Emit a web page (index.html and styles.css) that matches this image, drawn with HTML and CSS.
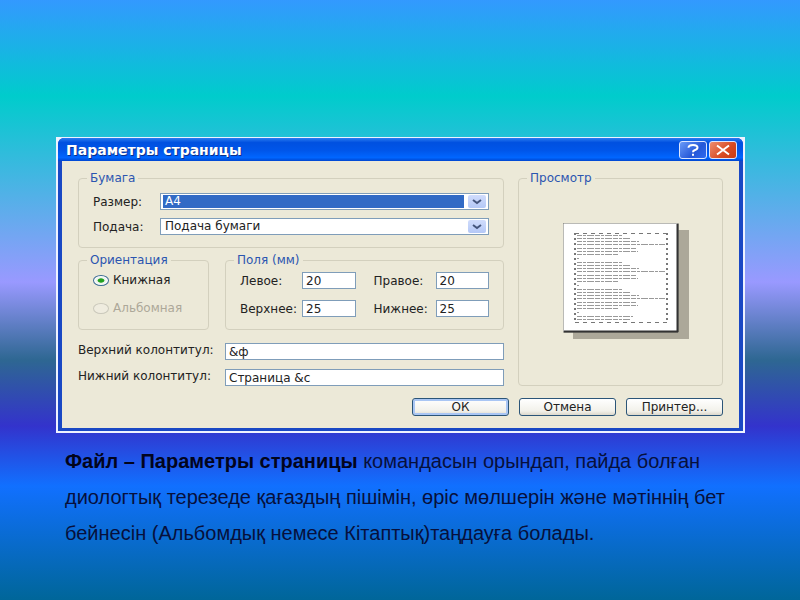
FILE: index.html
```html
<!DOCTYPE html>
<html lang="kk">
<head>
    <meta charset="UTF-8">
    <meta name="viewport" content="width=device-width, initial-scale=1.0">
    <title>Параметры страницы</title>
    <link rel="stylesheet" href="styles.css">
</head>
<body>
    <main class="slide">
        <form class="dialog" id="pageSetupForm">
            <div class="window">
                <div class="title-bar">
                    <h1>Параметры страницы</h1>
                    <button type="button" class="title-button" aria-label="Справка">
                        <svg viewBox="0 0 28 18" width="28" height="18"><path d="M9.500 6.800Q9.500 4 14 4t4.500 2.600Q18.500 8.400 15.500 9.300Q14 9.800 14 11.200M14 12.800v2" /></svg>
                    </button>
                    <button type="button" class="title-button close" aria-label="Закрыть">
                        <svg viewBox="0 0 28 18" width="28" height="18"><path d="M8 4.500L20 13.500M20 4.500L8 13.500" /></svg>
                    </button>
                </div>

                <div class="window-body">
                    <div class="columns">
                        <div class="settings">
                            <fieldset>
                                <legend>Бумага</legend>
                                <div class="paper">
                                    <label for="size">Размер:</label>
                                    <div class="combo">
                                        <select id="size" name="size" class="highlighted">
                                            <option>A4</option>
                                        </select>
                                        <svg class="arrow" viewBox="0 0 18 13" width="18" height="13"><path d="M5 5l4 3l4-3" /></svg>
                                    </div>
                                    <label for="source">Подача:</label>
                                    <div class="combo">
                                        <select id="source" name="source">
                                            <option>Подача бумаги</option>
                                        </select>
                                        <svg class="arrow" viewBox="0 0 18 13" width="18" height="13"><path d="M5 5l4 3l4-3" /></svg>
                                    </div>
                                </div>
                            </fieldset>

                            <div class="groups">
                                <fieldset>
                                    <legend>Ориентация</legend>
                                    <div class="orientation">
                                        <label><input type="radio" name="orientation" checked> Книжная</label>
                                        <label class="disabled"><input type="radio" name="orientation" disabled> Альбомная</label>
                                    </div>
                                </fieldset>
                                <fieldset>
                                    <legend>Поля (мм)</legend>
                                    <div class="margins">
                                        <label for="left">Левое:</label>
                                        <input type="text" id="left" value="20">
                                        <label for="right" class="second">Правое:</label>
                                        <input type="text" id="right" value="20">
                                        <label for="top">Верхнее:</label>
                                        <input type="text" id="top" value="25">
                                        <label for="bottom" class="second">Нижнее:</label>
                                        <input type="text" id="bottom" value="25">
                                    </div>
                                </fieldset>
                            </div>

                            <div class="running-titles">
                                <label for="header">Верхний колонтитул:</label>
                                <input type="text" id="header" value="&amp;ф">
                                <label for="footer">Нижний колонтитул:</label>
                                <input type="text" id="footer" value="Страница &amp;с">
                            </div>
                        </div>

                        <fieldset class="preview">
                            <legend>Просмотр</legend>
                            <svg class="page" viewBox="0 0 126 116" width="126" height="116">
                                <defs>
                                    <g id="paragraph">
                                        <path d="M14 12.500h45M14 15.500h54M14 18.500h62M14 21.500h88M14 25.500h60M14 28.500h61M14 31.500h42M14 35.500h2" />
                                    </g>
                                </defs>
                                <rect class="shadow" x="10" y="7" width="116" height="109" />
                                <rect class="sheet" x="0" y="0" width="115" height="109" />
                                <path class="edge" d="M1 108.500H115M114.500 1V109" />
                                <g class="sheet-text">
                                    <use href="#paragraph" />
                                    <use href="#paragraph" y="27" />
                                    <use href="#paragraph" y="54" />
                                    <path d="M14 93.500h56M14 96.500h54" />
                                </g>
                                <path class="guides" d="M12 10.500H104M12 99.500H104" />
                                <path class="guides side" d="M12 10V99M104 10V99" />
                            </svg>
                        </fieldset>
                    </div>

                    <div class="buttons">
                        <button type="submit" class="default">ОК</button>
                        <button type="button">Отмена</button>
                        <button type="button">Принтер...</button>
                    </div>
                </div>
            </div>
        </form>

        <p class="caption"><strong>Файл – Параметры страницы</strong> командасын орындап, пайда болған диологтық терезеде қағаздың пішімін, өріс мөлшерін және мәтіннің бет бейнесін (Альбомдық немесе Кітаптық)таңдауға болады.</p>
    </main>
</body>
</html>
```
FILE: styles.css
```css
* {
    box-sizing: border-box;
}
body {
    margin: 0;
    font-family: "Liberation Sans", Arial, sans-serif;
}
.slide {
    min-height: 100vh;
    padding: 137px 55px 0 56px;
    background: linear-gradient(#3399ff 0%, #00cccc 16%, #9999ff 47%, #2e6792 60%, #3333cc 71%, #1170ff 81%, #006699 100%);
}

/* dialog window */
.dialog {
    padding: 1px 2px 2px;
    background: #eef2ff;
    font-family: "DejaVu Sans", Verdana, sans-serif;
    font-size: 12px;
    line-height: 14px;
    color: #222;
}
.window {
    border: solid #1a48c4;
    border-width: 0 4px 3px;
    border-radius: 6px 6px 0 0;
    background: #1a48c4;
}
.title-bar {
    display: flex;
    align-items: center;
    gap: 2px;
    height: 23px;
    margin: 0 -4px;
    padding: 0 6px 0 8px;
    border-radius: 6px 6px 0 0;
    background: linear-gradient(#2a7cf0, #0050e0 20%, #0056ea 55%, #0066ff 85%, #0046d0);
}
.title-bar h1 {
    flex: 1;
    margin: 0;
    font-size: 14px;
    line-height: 16px;
    color: #fff;
    text-shadow: 1px 1px 0 #0a2f8c;
}
.title-button {
    width: 28px;
    height: 18px;
    padding: 0;
    border: 1px solid #dce6ff;
    border-radius: 3px;
    background: linear-gradient(135deg, #6a9af8, #2558d8 60%, #2f6af0);
}
.title-button.close {
    background: linear-gradient(135deg, #ee8e70, #d84a22 60%, #c83c14);
}
.title-button svg {
    display: block;
    margin: -1px;
    fill: none;
    stroke: #fff;
    stroke-width: 2;
}
.window-body {
    padding: 10px 16px 12px;
    background: #ece9d8;
}
.columns {
    display: grid;
    grid-template-columns: 426fr 205fr;
    gap: 14px;
}

/* groups */
fieldset {
    min-width: 0;
    margin: 0;
    padding: 0 14px 12px;
    border: 1px solid #d3d0be;
    border-radius: 4px;
}
legend {
    margin-left: -6px;
    padding: 0 3px;
    color: #2b55b0;
}
.settings {
    display: flex;
    flex-direction: column;
}
.paper {
    display: grid;
    grid-template-columns: 67px 1fr;
    align-items: center;
    row-gap: 8px;
    padding-top: 8px;
}
.combo {
    position: relative;
    height: 17px;
    border: 1px solid #7f9db9;
    background: #fff;
}
.combo select {
    display: block;
    width: 100%;
    height: 15px;
    padding: 1px 24px 1px 2px;
    border: 0;
    appearance: none;
    background: transparent;
    background-clip: content-box;
    font: inherit;
    line-height: 13px;
    color: #222;
    text-indent: 2px;
}
.combo select.highlighted {
    background-color: #316ac5;
    color: #fff;
}
.arrow {
    position: absolute;
    top: 1px;
    right: 2px;
    border-radius: 2px;
    background: linear-gradient(#d0dcfc, #b4c8f6);
    fill: none;
    stroke: #44557c;
    stroke-width: 2;
    pointer-events: none;
}
.groups {
    display: grid;
    grid-template-columns: 131fr 279fr;
    gap: 16px;
    margin-top: 5px;
}
.orientation {
    display: flex;
    flex-direction: column;
    gap: 14px;
    padding-top: 6px;
}
.orientation label {
    display: flex;
    align-items: center;
    gap: 4px;
}
.orientation .disabled {
    color: #aca899;
}
input[type="radio"] {
    width: 16px;
    height: 11px;
    margin: 0;
    border: 1px solid #3c6c94;
    border-radius: 50%;
    appearance: none;
    background: #fff;
}
input[type="radio"]:checked {
    background: radial-gradient(closest-side, #21a121 40%, #e8f0e8 55%, #fff);
}
input[type="radio"]:disabled {
    border-color: #cac8bb;
    background: #efecdf;
}
.margins {
    display: grid;
    grid-template-columns: 62px 1fr 80px 1fr;
    align-items: center;
    row-gap: 11px;
    padding-top: 5px;
}
.margins .second {
    padding-left: 18px;
}
input[type="text"] {
    width: 100%;
    height: 17px;
    padding: 0 3px;
    border: 1px solid #7f9db9;
    background: #fff;
    font: inherit;
    color: #222;
}
.running-titles {
    display: grid;
    grid-template-columns: 147px 1fr;
    row-gap: 9px;
    margin-top: 13px;
}

/* sheet preview */
.preview {
    display: flex;
    align-items: flex-start;
    justify-content: center;
    padding: 38px 14px 12px 24px;
}
.preview legend {
    margin-left: -16px;
}
.shadow {
    fill: #aca899;
}
.sheet {
    fill: #fff;
    stroke: #77776f;
}
.edge {
    fill: none;
    stroke: #333;
    stroke-width: 2;
}
.sheet-text {
    stroke: #999;
    stroke-width: 1;
    stroke-dasharray: 5 1 3 1 7 1;
}
.guides {
    fill: none;
    stroke: #777;
    stroke-dasharray: 4 4;
}
.guides.side {
    stroke-width: 2;
    stroke-dasharray: 2 3;
}

.buttons {
    display: flex;
    justify-content: flex-end;
    gap: 10px;
    margin-top: 12px;
}
.buttons button {
    width: 97px;
    height: 18px;
    padding: 0;
    border: 1px solid #2b5578;
    border-radius: 3px;
    background: linear-gradient(#fff, #f2f1ea 75%, #dcd8cc);
    font: inherit;
    color: #222;
}
.buttons .default {
    box-shadow: inset 0 0 0 2px #a9c6f4;
}

.caption {
    margin: 10px 0 0;
    padding: 0 9px;
    font-size: 20px;
    line-height: 36px;
    color: #07103c;
}
.caption strong {
    color: #02041c;
}
```
